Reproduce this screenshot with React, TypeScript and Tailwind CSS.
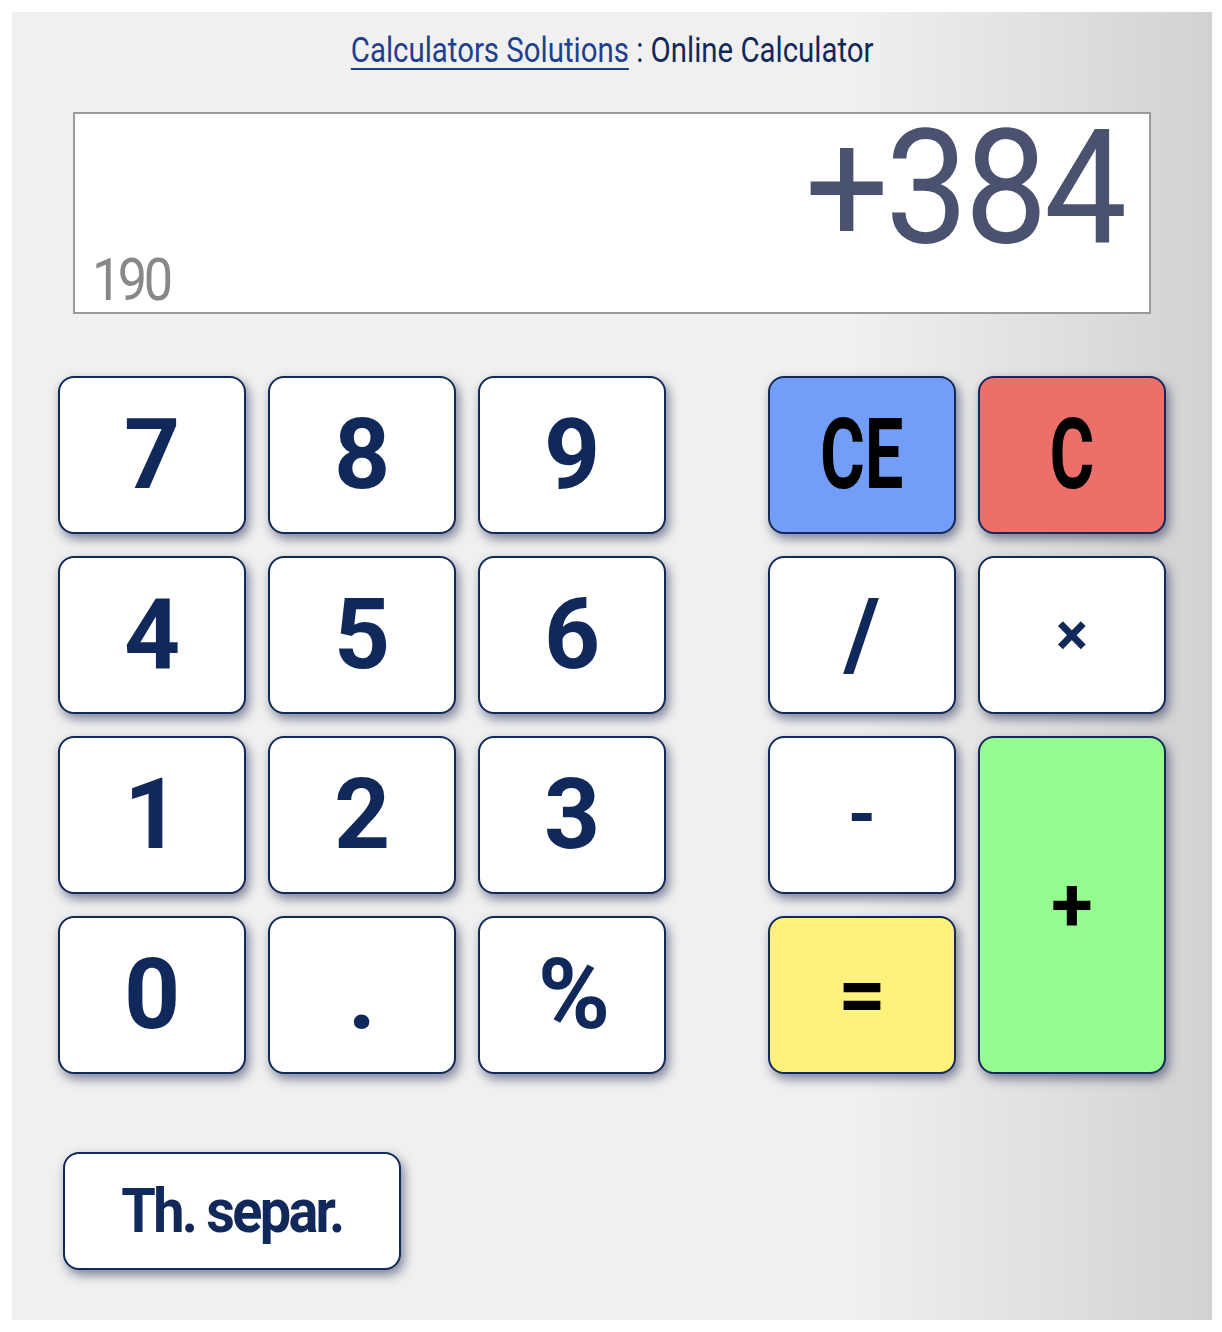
import React from "react";

const font = "font-['Roboto','Liberation_Sans',sans-serif]";

type Key = {
  label: string;
  bg?: string;
  text?: string;
  size?: string;
  span?: string;
  extra?: string;
};

const digits: Key[] = [
  { label: "7" }, { label: "8" }, { label: "9" },
  { label: "4" }, { label: "5" }, { label: "6" },
  { label: "1" }, { label: "2" }, { label: "3" },
  { label: "0" }, { label: "." }, { label: "%", extra: "tracking-[-4px]" },
];

function Button({ k }: { k: Key }) {
  return (
    <button
      className={`flex items-center justify-center rounded-[16px] border-2 border-[#14295a] shadow-[3px_5px_11px_rgba(30,40,80,0.55)] ${font} font-bold leading-none ${k.bg ?? "bg-white"} ${k.text ?? "text-[#10295a]"} ${k.size ?? "text-[98px]"} ${k.span ?? "h-[158px]"}`}
    >
      <span className={`inline-block ${k.extra ?? ""}`}>{k.label}</span>
    </button>
  );
}

export default function App() {
  return (
    <div className="w-[1222px] h-[1332px] bg-white p-[12px]">
      <div className="h-[1308px] w-[1200px] bg-[linear-gradient(to_right,#f0f0f0_70%,#d2d2d2)] flex flex-col">
        {/* header */}
        <div className={`pt-[19px] h-[100px] text-center text-[35px] leading-[40px] ${font}`}>
          <span className="inline-block scale-x-[0.84] whitespace-nowrap">
            <a className="text-[#1d3f8f] underline decoration-2 underline-offset-[6px]">Calculators Solutions</a>
            <span className="text-[#10295a]"> : Online Calculator</span>
          </span>
        </div>

        {/* display */}
        <div className="mx-[61px] h-[202px] border-2 border-[#9a9a9a] bg-white flex flex-col justify-between">
          <div className={`text-right pr-[26px] pt-[24px] text-[159px] leading-[100px] tracking-[-4px] text-[#4a5270] ${font}`}>
            <span className="inline-block origin-right scale-x-[0.93]">+384</span>
          </div>
          <div className={`pl-[17px] pb-[2px] text-[60px] leading-[60px] tracking-[-4px] text-[#888888] ${font}`}>
            <span className="inline-block origin-left scale-x-[0.87]">190</span>
          </div>
        </div>

        {/* keypad */}
        <div className="mt-[62px] ml-[46px] flex gap-[102px]">
          <div className="grid grid-cols-[repeat(3,188px)] grid-rows-[repeat(4,158px)] gap-[22px]">
            {digits.map((k) => (
              <Button key={k.label} k={k} />
            ))}
          </div>
          <div className="grid grid-cols-[repeat(2,188px)] grid-rows-[repeat(4,158px)] gap-[22px]">
            <Button k={{ label: "CE", bg: "bg-[#739ef8]", text: "text-black", extra: "scale-x-[0.7]" }} />
            <Button k={{ label: "C", bg: "bg-[#ec7069]", text: "text-black", extra: "scale-x-[0.7]" }} />
            <Button k={{ label: "/" }} />
            <Button k={{ label: "×", size: "text-[60px]" }} />
            <Button k={{ label: "-", size: "text-[72px]" }} />
            <Button k={{ label: "+", bg: "bg-[#95fd8f]", text: "text-black", size: "text-[76px]", span: "row-span-2 h-[338px]" }} />
            <Button k={{ label: "=", bg: "bg-[#fff27c]", text: "text-black", size: "text-[84px]" }} />
          </div>
        </div>

        {/* thousands separator */}
        <div className="mt-[78px] ml-[51px]">
          <button
            className={`w-[338px] h-[118px] rounded-[16px] border-2 border-[#14295a] bg-white shadow-[3px_5px_11px_rgba(30,40,80,0.55)] ${font} font-bold text-[62px] leading-none tracking-[-3px] text-[#10295a]`}
          >
            <span className="inline-block scale-x-[0.9]">Th. separ.</span>
          </button>
        </div>
      </div>
    </div>
  );
}
